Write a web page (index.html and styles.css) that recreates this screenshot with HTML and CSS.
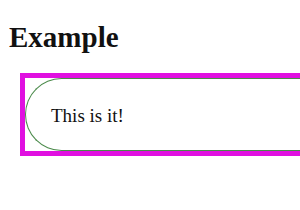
FILE: index.html
```html
<!DOCTYPE html>
<html lang="en">
<head>
    <meta charset="UTF-8">
    <title>Example</title>
    <link rel="stylesheet" href="styles.css">
</head>
<body>
    <h2 class="title">Example</h2>

    <!-- outer frame with the rounded pill inside -->
    <div class="frame">
        <div class="pill">This is it!</div>
    </div>
</body>
</html>
```

FILE: styles.css
```css
* {
    box-sizing: border-box;
}

body {
    margin: 0;
    background: #fff;
    color: #111;
    font-family: 'Liberation Serif', 'Times New Roman', serif;
    overflow: hidden;
}

.title {
    margin: 21px 0 19px 9px;
    font-size: 29px;
    font-weight: bold;
    line-height: 33px;
}

.frame {
    margin-left: 20px;
    width: 280px;
    border: 5px solid #e010e0;
    border-right: none;
}

.pill {
    display: flex;
    align-items: center;
    height: 73px;
    padding: 2px 0 0 25px;
    border: 1px solid #4a8a4a;
    border-right: none;
    border-radius: 37px 0 0 37px;
    font-size: 19px;
}
```
